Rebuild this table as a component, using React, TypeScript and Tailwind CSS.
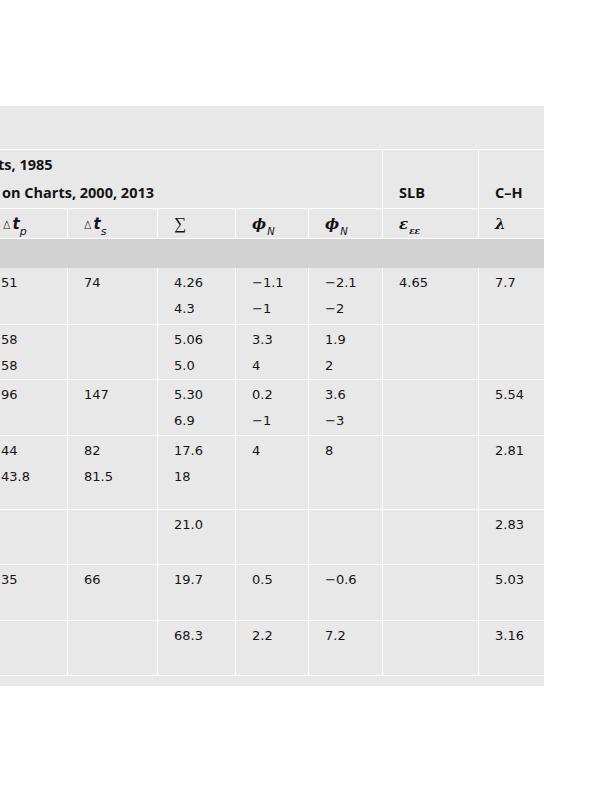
import React from 'react';

interface DataRow {
  cells: string[][];
  height: string;
}

// column widths, left to right (first column is cut by the page edge)
const colWidths = ['w-[67px]', 'w-[90px]', 'w-[78px]', 'w-[73px]', 'w-[74px]', 'w-[96px]', 'w-[66px]'];

const rows: DataRow[] = [
  { height: 'h-[57px]', cells: [['51'], ['74'], ['4.26', '4.3'], ['\u22121.1', '\u22121'], ['\u22122.1', '\u22122'], ['4.65'], ['7.7']] },
  { height: 'h-[55px]', cells: [['58', '58'], [], ['5.06', '5.0'], ['3.3', '4'], ['1.9', '2'], [], []] },
  { height: 'h-[56px]', cells: [['96'], ['147'], ['5.30', '6.9'], ['0.2', '\u22121'], ['3.6', '\u22123'], [], ['5.54']] },
  { height: 'h-[74px]', cells: [['44', '43.8'], ['82', '81.5'], ['17.6', '18'], ['4'], ['8'], [], ['2.81']] },
  { height: 'h-[55px]', cells: [[], [], ['21.0'], [], [], [], ['2.83']] },
  { height: 'h-[56px]', cells: [['35'], ['66'], ['19.7'], ['0.5'], ['\u22120.6'], [], ['5.03']] },
  { height: 'h-[55px]', cells: [[], [], ['68.3'], ['2.2'], ['7.2'], [], ['3.16']] },
];

const mathFont = "font-['DejaVu_Serif','Liberation_Serif',serif]";

const Phi: React.FC = () => (
  <span className={`${mathFont} italic font-bold text-[15px]`}>
    ϕ<sub className="font-['DejaVu_Sans',sans-serif] text-[10px] font-normal align-[-3px] ml-[1px]">N</sub>
  </span>
);

const DeltaT: React.FC<{ sub: string }> = ({ sub }) => (
  <span className="font-['DejaVu_Sans',sans-serif] text-[15px]">
    <span className="text-[11px] font-light mr-[2px]">Δ</span>
    <span className="italic font-semibold">t</span>
    <sub className="italic text-[11px] align-[-3px]">{sub}</sub>
  </span>
);

const headerCells: React.ReactNode[] = [
  <span className="ml-[3px]"><DeltaT sub="p" /></span>,
  <DeltaT sub="s" />,
  <span className="font-['Liberation_Serif',serif] text-[17px]">∑</span>,
  <Phi />,
  <Phi />,
  <span className={`${mathFont} italic font-bold text-[15px]`}>
    ε<sub className="text-[9px] font-bold align-[-3px] ml-[1px]">εε</sub>
  </span>,
  <span className={`${mathFont} italic font-bold text-[15px]`}>λ</span>,
];

const App: React.FC = () => {
  return (
    <div className="w-[599px] h-[800px] bg-white overflow-hidden pt-[106px] text-[#161415] font-['DejaVu_Sans',sans-serif]">
      <div className="w-[544px] bg-[#e8e8e8] overflow-hidden">
        {/* empty title band */}
        <div className="h-[44px] border-b border-white" />

        {/* source header */}
        <div className="flex h-[59px] border-b border-white font-['Open_Sans',sans-serif] font-bold text-[14.5px] leading-[28px]">
          <div className="w-[382px] pt-[1px] whitespace-nowrap">
            <div className="ml-[-2px]">ts, 1985</div>
            <div className="ml-[2px]">on Charts, 2000, 2013</div>
          </div>
          <div className="w-[96px] border-l border-white pl-4 pt-[29px]">SLB</div>
          <div className="w-[66px] border-l border-white pl-4 pt-[29px]">C–H</div>
        </div>

        {/* symbol header */}
        <div className="flex h-[30px] border-b border-white leading-[28px]">
          {headerCells.map((cell, i) => (
            <div key={i} className={`${colWidths[i]} ${i > 0 ? 'border-l border-white pl-4' : ''} pt-[1px] whitespace-nowrap`}>
              {cell}
            </div>
          ))}
        </div>

        {/* grey group band */}
        <div className="h-[29px] bg-[#d3d2d3]" />

        {/* data rows */}
        {rows.map((row, r) => (
          <div key={r} className={`flex ${row.height} border-b border-white text-[13px] leading-[26px]`}>
            {row.cells.map((lines, i) => (
              <div key={i} className={`${colWidths[i]} ${i > 0 ? 'border-l border-white pl-4' : 'pl-[1px]'} pt-[2px]`}>
                {lines.map((line, j) => (
                  <div key={j}>{line}</div>
                ))}
              </div>
            ))}
          </div>
        ))}

        {/* bottom band */}
        <div className="h-[10px]" />
      </div>
    </div>
  );
};

export default App;
